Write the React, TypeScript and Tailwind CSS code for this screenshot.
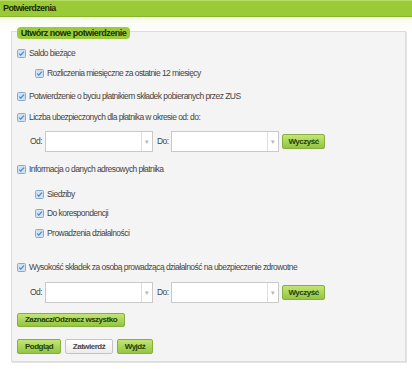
import React from "react";

function Check() {
  return (
    <svg width="9" height="9" viewBox="0 0 9 9" className="shrink-0">
      <rect x="0.5" y="0.5" width="8" height="8" rx="1" fill="#cfe2f3" stroke="#86acd0" />
      <path d="M2.2 4.6 L3.8 6.2 L6.9 2.6" fill="none" stroke="#4b84bf" strokeWidth="1.2" />
    </svg>
  );
}

function Row({ label, sub = false, h = "h-[20px]", mt = "" }: { label: string; sub?: boolean; h?: string; mt?: string }) {
  return (
    <div className={`flex items-center ${h} ${mt} ${sub ? "pl-[18px]" : ""}`}>
      <Check />
      <span className="ml-[3px] whitespace-nowrap">{label}</span>
    </div>
  );
}

function Combo() {
  return (
    <div className="flex h-[21px] w-[108px] border border-[#c9c9c9] bg-white">
      <div className="flex-1" />
      <div className="flex w-[11px] items-center justify-center border-l border-[#dedede] text-[7px] leading-none text-[#b5b5b5]">
        ▾
      </div>
    </div>
  );
}

function GreenBtn({ label, w }: { label: string; w: string }) {
  return (
    <div
      className={`flex h-[15px] ${w} items-center justify-center whitespace-nowrap rounded-[2px] border border-[#86b03e] bg-gradient-to-b from-[#c4e574] to-[#93c53f] text-[8px] font-bold tracking-[-0.5px] text-[#23400a]`}
    >
      {label}
    </div>
  );
}

function DateRow({ mt }: { mt: string }) {
  return (
    <div className={`flex h-[21px] items-center ${mt}`}>
      <span className="w-[28px] pl-[13px]">Od:</span>
      <Combo />
      <span className="w-[18px] pl-[4px]">Do:</span>
      <Combo />
      <div className="ml-[3px]">
        <GreenBtn label="Wyczyść" w="w-[43px]" />
      </div>
    </div>
  );
}

export default function App() {
  return (
    <div className="h-[369px] w-[412px] overflow-hidden bg-white font-['Liberation_Sans',Arial,sans-serif] text-[8.5px] leading-none tracking-[-0.55px] text-[#444444]">
      <div className="flex h-[17px] items-center border-t border-t-[#b6dc66] border-b border-b-[#86b52c] bg-[#9acb36] pl-[3px] text-[9px] font-bold tracking-[-0.6px] text-[#1c2e08]">
        Potwierdzenia
      </div>
      <div className="h-[14px] bg-gradient-to-b from-[#f6fbea] to-white" />
      <div className="ml-[11px] flex h-[331px] w-[395px] flex-col border border-[#dcdcdc] bg-[#f4f4f4] pl-[5px] shadow-[1px_1px_0_#e4e4e4]">
        <div className="-mt-[5px] flex h-[12px] w-[113px] items-center justify-center whitespace-nowrap rounded-[4px] bg-[#9ccb3a] text-[9px] font-bold tracking-[-0.5px] text-[#16320a]">
          Utwórz nowe potwierdzenie
        </div>
        <Row label="Saldo bieżące" mt="mt-[4px]" />
        <Row label="Rozliczenia miesięczne za ostatnie 12 miesięcy" sub />
        <Row label="Potwierdzenie o byciu płatnikiem składek pobieranych przez ZUS" mt="mt-[3px]" />
        <Row label="Liczba ubezpieczonych dla płatnika w okresie od: do:" mt="mt-[1px]" />
        <DateRow mt="mt-[4px]" />
        <Row label="Informacja o danych adresowych płatnika" mt="mt-[7px]" />
        <Row label="Siedziby" sub mt="mt-[5px]" />
        <Row label="Do korespondencji" sub h="h-[19px]" />
        <Row label="Prowadzenia działalności" sub />
        <Row label="Wysokość składek za osobą prowadzącą działalność na ubezpieczenie zdrowotne" mt="mt-[14px]" />
        <DateRow mt="mt-[5px]" />
        <div className="mt-[10px] flex">
          <div className="flex h-[14px] w-[108px] items-center justify-center whitespace-nowrap rounded-[2px] border border-[#86b03e] bg-gradient-to-b from-[#c4e574] to-[#93c53f] text-[8px] font-bold tracking-[-0.5px] text-[#23400a]">
            Zaznacz/Odznacz wszystko
          </div>
        </div>
        <div className="mt-[12px] flex gap-[4px]">
          <GreenBtn label="Podgląd" w="w-[44px]" />
          <div className="flex h-[15px] w-[48px] items-center justify-center whitespace-nowrap rounded-[2px] border border-[#c4c4c4] bg-gradient-to-b from-white to-[#ececec] text-[8px] font-bold tracking-[-0.5px] text-[#4a4a4a]">
            Zatwierdź
          </div>
          <GreenBtn label="Wyjdź" w="w-[36px]" />
        </div>
      </div>
    </div>
  );
}
